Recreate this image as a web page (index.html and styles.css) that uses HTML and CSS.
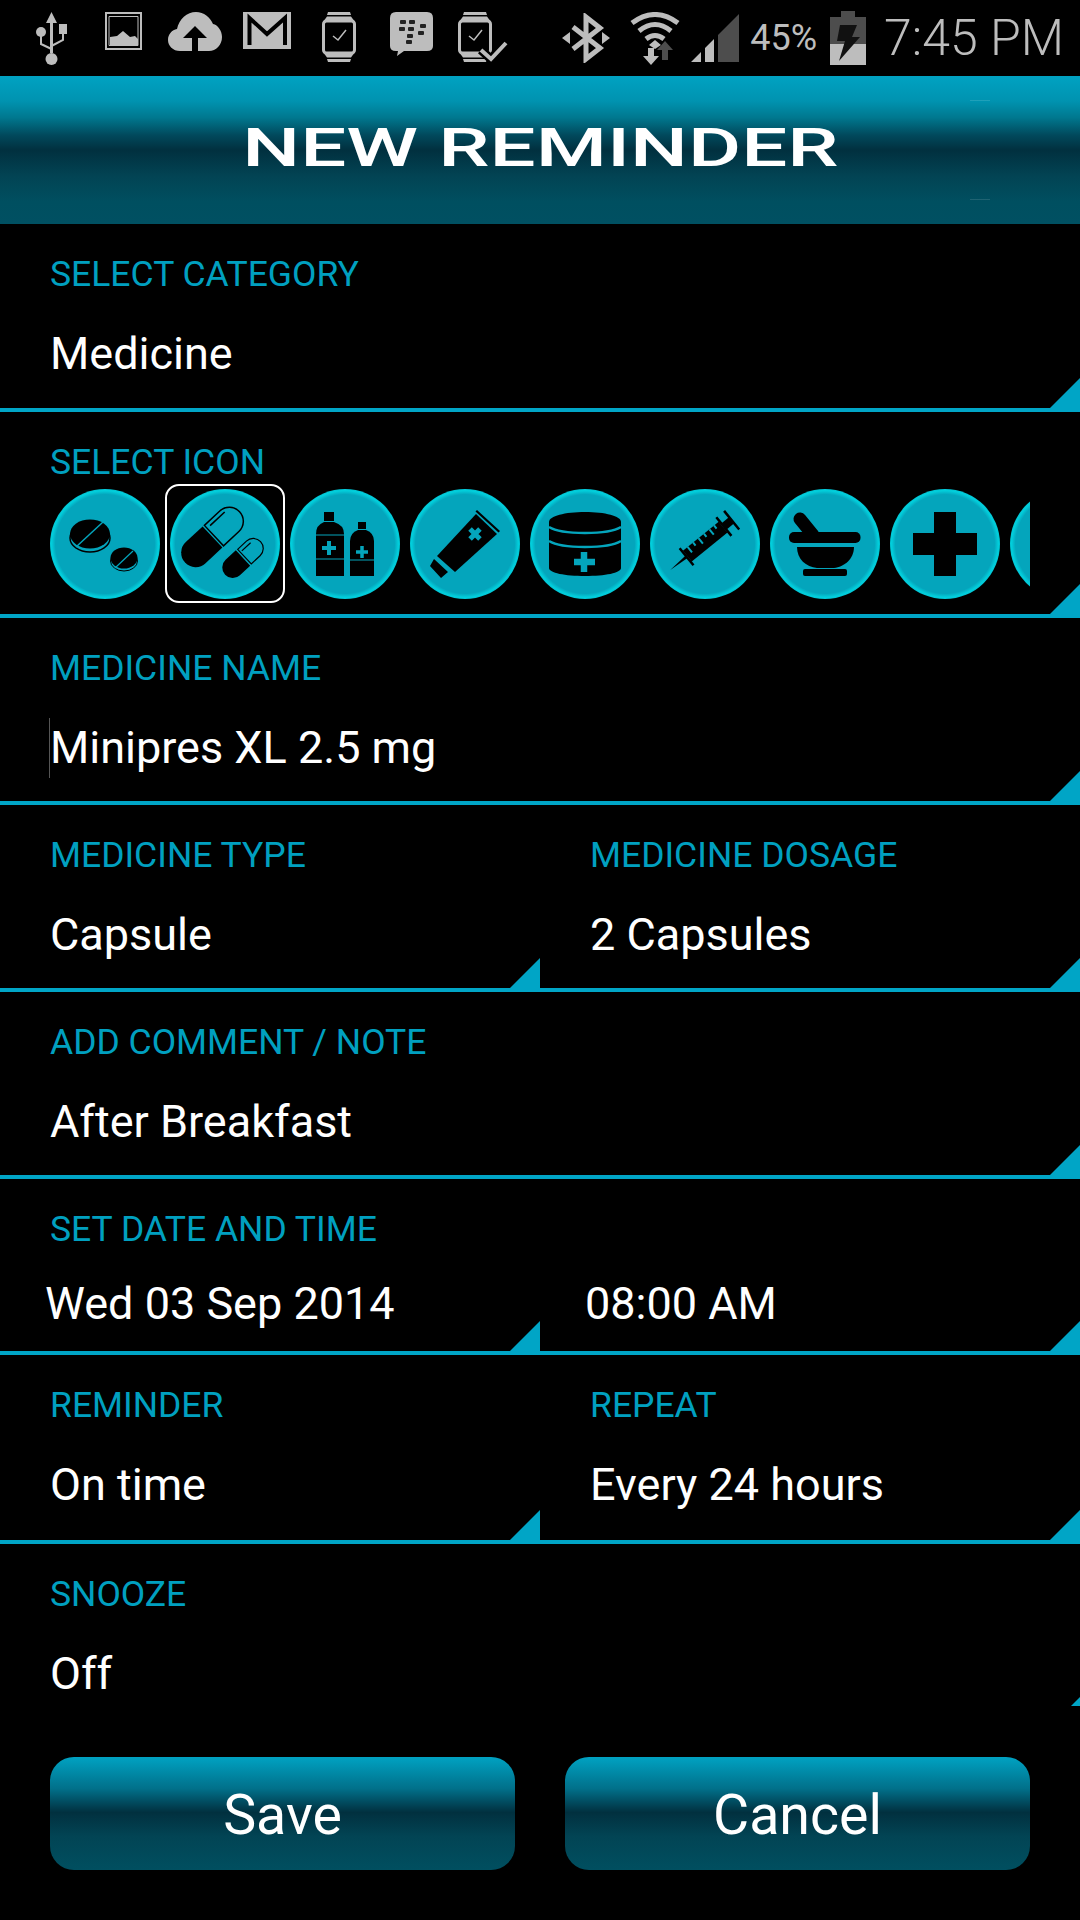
FILE: index.html
```html
<!DOCTYPE html>
<html lang="en">
<head>
  <meta charset="UTF-8" />
  <meta name="viewport" content="width=device-width, initial-scale=1.0"/>
  <title>New Reminder</title>
  <link rel="stylesheet" href="styles.css">
</head>
<body>

  <div class="status-bar">
    <div class="status-left">
      <div class="status-cell">
        <svg width="31" height="53" viewBox="0 0 31 53"><path class="sb" d="M15.500 0l5.500 11h-4v30h-3V11h-4z"/><circle class="sb" cx="15.500" cy="47" r="6"/><circle class="sb" cx="5" cy="20" r="5"/><rect class="sb" x="23" y="12" width="8" height="10"/><path class="sl" d="M5 22v10l10.500 5M27 20v8l-11.500 6"/></svg>
      </div>
      <div class="status-cell">
        <svg width="37" height="38" viewBox="0 0 37 38"><rect class="sl" x="1" y="1" width="35" height="36"/><path class="sb" d="M5 33V25l7-1 6-5 7 6 5-1 3 3v6z"/><path class="sl-thin" d="M4 4.500h29v29H4z"/></svg>
      </div>
      <div class="status-cell">
        <svg width="54" height="39" viewBox="0 0 54 39"><path class="sb" d="M12 39C5 39 0 34 0 28s4-10 9-11C11 7 19 0 28 0c8 0 14 5 17 12 5 1 9 7 9 13 0 8-6 14-13 14H30V26h9L27 14 15 26h9v13z"/></svg>
      </div>
      <div class="status-cell">
        <svg width="48" height="37" viewBox="0 0 48 37"><rect class="sb" width="48" height="37"/><path class="gmail" d="M6.500 33V6l17.500 16 18-16v27"/></svg>
      </div>
      <div class="status-cell">
        <svg width="34" height="50" viewBox="0 0 34 50"><use href="#watch"/></svg>
      </div>
      <div class="status-cell">
        <svg width="43" height="44" viewBox="0 0 43 44"><path class="sb" d="M6 0h31q6 0 6 6v28q0 5-6 5H14l-7 5 1-5H6q-6 0-6-5V6q0-6 6-6z"/><g class="bbm"><rect x="10" y="8" width="6" height="4" rx="1"/><rect x="19" y="8" width="6" height="4" rx="1"/><rect x="9" y="15" width="6" height="4" rx="1"/><rect x="18" y="15" width="6" height="4" rx="1"/><rect x="30" y="12" width="6" height="4" rx="1"/><rect x="28" y="19" width="6" height="4" rx="1"/><rect x="17" y="22" width="6" height="4" rx="1"/><rect x="16" y="28" width="6" height="4" rx="1"/></g></svg>
      </div>
      <div class="status-cell">
        <svg width="51" height="50" viewBox="0 0 51 50"><use href="#watch"/><path class="check-cut" d="M23 38l10 9 15-16"/><path class="check" d="M23 38l10 9 15-16"/></svg>
      </div>
    </div>
    <div class="status-right">
      <svg class="status-bt" width="48" height="50" viewBox="0 0 48 50"><path class="bt" d="M11 14l27 21-14 11V4l14 11-27 21"/><path class="sb" d="M0 25l8-6v12zM48 25l-8-6v12z"/></svg>
      <svg class="status-wifi" width="50" height="53" viewBox="0 0 50 53"><path class="wf" d="M2 11Q25-6 48 11M9 19Q25 6 41 19M16 27q9-7 18 0"/><path class="sb" d="M25 28l6 5-6 4-6-4zM18 36h6v8h5l-8 9-8-9h5z"/><path class="dim" d="M35 29l8 9h-5v10h-6V38h-5z"/></svg>
      <svg class="status-signal" width="48" height="48" viewBox="0 0 48 48"><path class="sb" d="M0 48l10-10v10zM14 34l9-9v23h-9z"/><path class="dim" d="M27 21L48 0v48H27z"/></svg>
      <span class="status-pct">45%</span>
      <svg class="status-battery" width="36" height="54" viewBox="0 0 36 54"><path class="dim" d="M11 0h14v6h11v30H0V6h11z"/><rect class="sb" y="33" width="36" height="21"/><path class="bolt" d="M10 14h17l-5 12h8L9 50l6-20H7z"/></svg>
      <span class="status-time">7:45 PM</span>
    </div>
    <svg class="defs" width="0" height="0"><defs><g id="watch"><path class="sb" d="M6 0h22l1 3H5zM5 4.500h24L33 10H1zM1 40h32l-4 5.500H5zM5 47h24l-1 3H6z"/><rect class="wl" x="1.500" y="9" width="31" height="32" rx="3"/><path class="wl-thin" d="M11 24l5 4 8-10"/></g></defs></svg>
  </div>

  <header class="app-header">
    <h1 class="app-title">NEW REMINDER</h1>
  </header>

  <div class="form">
    <div class="row row-category">
      <div class="cell">
        <div class="label">SELECT CATEGORY</div>
        <div class="value">Medicine</div>
      </div>
    </div>

    <div class="row row-icons">
      <div class="cell">
        <div class="label">SELECT ICON</div>
        <div class="icon-strip">

          <div class="med">
            <svg viewBox="0 0 110 110">
              <ellipse class="ln" cx="40" cy="49" rx="20" ry="14" stroke-width="1.500"/>
              <ellipse cx="40" cy="45" rx="20" ry="14.500"/>
              <path class="gap" d="M26 58l27-25" stroke-width="1.500"/>
              <ellipse class="ln" cx="74" cy="72" rx="13.500" ry="10" stroke-width="1"/>
              <ellipse cx="74" cy="69" rx="13.500" ry="10.500"/>
              <path class="gap" d="M65 79l18-17" stroke-width="1.200"/>
            </svg>
          </div>

          <div class="med med-selected">
            <svg viewBox="0 0 110 110">
              <g transform="translate(42.500 48) rotate(-43)">
                <path d="M0-14.500H-23a14.500 14.500 0 0 0 0 29H0z"/>
                <path class="ln" stroke-width="1.500" d="M2-14H23a14 14 0 0 1 0 28H2z"/>
                <path class="ln" stroke-width="1.500" d="M6-10H26"/>
              </g>
              <g transform="translate(73 69) rotate(-43)">
                <path d="M0-10.500H-14a10.500 10.500 0 0 0 0 21H0z"/>
                <path class="ln" stroke-width="1.200" d="M2-10H14a10 10 0 0 1 0 20H2z"/>
                <path class="ln" stroke-width="1.200" d="M4-6H16"/>
              </g>
            </svg>
          </div>

          <div class="med">
            <svg viewBox="0 0 110 110">
              <rect x="34" y="23" width="10" height="9"/>
              <path d="M26 87V45q0-9 8-12h10q10 3 10 12v42z"/>
              <path class="gap" d="M26 46h28M26 70h28" stroke-width="1"/>
              <path class="gap" d="M39 52v14M32 59h14" stroke-width="4"/>
              <rect x="68" y="33" width="8" height="7"/>
              <path d="M60 87V52q0-8 8-11h8q8 3 8 11v35z"/>
              <path class="gap" d="M60 71h24" stroke-width="1"/>
              <path class="gap" d="M72 57v12M66 63h12" stroke-width="3.500"/>
            </svg>
          </div>

          <div class="med">
            <svg viewBox="0 0 110 110">
              <path d="M66 25l21 20L45 83 27 67z"/>
              <path d="M67 21l23 21-1.500 1.500-23-21zM24 70l14 13-7 6-11-12z"/>
              <path class="gap" d="M58 45l14 0M65 38l0 14" stroke-width="5" transform="rotate(45 65 45)"/>
            </svg>
          </div>

          <div class="med">
            <svg viewBox="0 0 110 110">
              <path d="M19 33c0-6 16-10 36-10s36 4 36 10v46c0 5-16 8-36 8s-36-3-36-8z"/>
              <path class="gap" d="M19 38c8 5 22 6 36 6s28-1 36-6M19 52c8 5 22 6 36 6s28-1 36-6" stroke-width="2.500"/>
              <path class="gap" d="M54 63v20M44 73h21" stroke-width="6.500"/>
            </svg>
          </div>

          <div class="med">
            <svg viewBox="0 0 110 110">
              <g transform="translate(56 52) rotate(-39)">
                <rect x="-24" y="-7" width="46" height="14"/>
                <path class="gap" d="M-18-7v7M-11-7v4M-4-7v7M3-7v4M10-7v7M16-7v4" stroke-width="2"/>
                <path class="ln" stroke-width="2.500" d="M-25-11V11M23-12V12M33-12V12"/>
                <rect x="23" y="-4" width="10" height="8"/>
                <path d="M-25-1.500L-46 0-25 1.500z"/>
              </g>
            </svg>
          </div>

          <div class="med">
            <svg viewBox="0 0 110 110">
              <path class="ln" stroke-width="13" stroke-linecap="round" d="M30 30L43 46"/>
              <rect x="19" y="43" width="71.500" height="11" rx="5"/>
              <path d="M27 58h57c0 12-10 20-20 21H47c-11-1-20-9-20-21z"/>
              <rect x="33" y="80" width="44" height="7" rx="2"/>
            </svg>
          </div>

          <div class="med">
            <svg viewBox="0 0 110 110">
              <path d="M44 23h22v21h21v22H66v21H44V66H23V44h21z"/>
            </svg>
          </div>

          <div class="med"></div>
        </div>
      </div>
    </div>

    <div class="row row-name">
      <div class="cell">
        <div class="label">MEDICINE NAME</div>
        <div class="value value-caret">Minipres XL 2.5 mg</div>
      </div>
    </div>

    <div class="row row-split">
      <div class="cell">
        <div class="label">MEDICINE TYPE</div>
        <div class="value">Capsule</div>
      </div>
      <div class="cell">
        <div class="label">MEDICINE DOSAGE</div>
        <div class="value">2 Capsules</div>
      </div>
    </div>

    <div class="row row-note">
      <div class="cell">
        <div class="label">ADD COMMENT / NOTE</div>
        <div class="value">After Breakfast</div>
      </div>
    </div>

    <div class="row row-split row-date">
      <div class="cell">
        <div class="label">SET DATE AND TIME</div>
        <div class="value value-date">Wed 03 Sep 2014</div>
      </div>
      <div class="cell">
        <div class="label">&nbsp;</div>
        <div class="value value-date">08:00 AM</div>
      </div>
    </div>

    <div class="row row-split row-repeat">
      <div class="cell">
        <div class="label">REMINDER</div>
        <div class="value">On time</div>
      </div>
      <div class="cell">
        <div class="label">REPEAT</div>
        <div class="value">Every 24 hours</div>
      </div>
    </div>

    <div class="row row-snooze">
      <div class="cell">
        <div class="label">SNOOZE</div>
        <div class="value">Off</div>
      </div>
    </div>
  </div>

  <div class="actions">
    <button class="btn">Save</button>
    <button class="btn">Cancel</button>
  </div>

</body>
</html>
```

FILE: styles.css
```css
* {
  box-sizing: border-box;
}
body {
  margin: 0;
  width: 1080px;
  height: 1920px;
  overflow: hidden;
  background-color: #000;
  font-family: Roboto, 'Liberation Sans', sans-serif;
  color: #fff;
}

/* status bar */
.status-bar {
  height: 76px;
  display: flex;
  justify-content: space-between;
  align-items: center;
  color: #bdbdbd;
}
.status-left {
  display: flex;
  padding-left: 15px;
}
.status-cell {
  width: 72px;
  display: flex;
  justify-content: center;
}
.status-right {
  display: flex;
  align-items: center;
  padding-right: 16px;
}
.status-bar svg {
  display: block;
}
.defs {
  position: absolute;
}
.status-wifi {
  margin-left: 20px;
}
.status-signal {
  margin-left: 11px;
}
.status-pct {
  margin-left: 11px;
  font-size: 36px;
}
.status-battery {
  margin-left: 13px;
}
.status-time {
  margin-left: 18px;
  font-size: 50px;
  font-weight: 300;
}
.sb {
  fill: #bdbdbd;
}
.sl {
  fill: none;
  stroke: #bdbdbd;
  stroke-width: 2;
}
.sl-thin {
  fill: none;
  stroke: #bdbdbd;
  stroke-width: 1;
}
.bt {
  fill: none;
  stroke: #bdbdbd;
  stroke-width: 5;
}
.dim {
  fill: #4d4d4d;
}
.bolt {
  fill: #111;
}
.bbm {
  fill: #222;
}
.gmail {
  fill: none;
  stroke: #000;
  stroke-width: 4;
}
.wf {
  fill: none;
  stroke: #bdbdbd;
  stroke-width: 5;
}
.wl {
  fill: #000;
  stroke: #bdbdbd;
  stroke-width: 3;
}
.wl-thin {
  fill: none;
  stroke: #bdbdbd;
  stroke-width: 1.500;
}
.check {
  fill: none;
  stroke: #bdbdbd;
  stroke-width: 4;
}
.check-cut {
  fill: none;
  stroke: #000;
  stroke-width: 9;
}

/* header */
.app-header {
  position: relative;
  height: 148px;
  display: flex;
  justify-content: center;
  align-items: center;
  padding-bottom: 4px;
  background: linear-gradient(to bottom, #00a2c2 0%, #0093b0 17%, #00788f 28%, #01495c 40%, #01303f 50%, #024454 68%, #004f60 85%, #005062 100%);
}
.app-header::before,
.app-header::after {
  content: "";
  position: absolute;
  right: 90px;
  width: 20px;
  height: 1px;
  background-color: rgba(255, 255, 255, 0.12);
}
.app-header::before {
  top: 24px;
}
.app-header::after {
  top: 123px;
}
.app-title {
  margin: 0;
  font-size: 54px;
  font-weight: 500;
  line-height: 1;
  transform: scaleX(1.51);
}

/* form rows */
.form {
  height: 1482px;
  overflow: hidden;
}
.row {
  display: flex;
  height: 187px;
}
.row-category {
  height: 188px;
}
.row-icons {
  height: 206px;
}
.row-date {
  height: 176px;
}
.row-repeat {
  height: 189px;
}
.cell {
  position: relative;
  flex: 1;
  padding: 31px 0 0 50px;
  border-bottom: 4px solid #00a5c6;
}
.cell::after {
  content: "";
  position: absolute;
  right: 0;
  bottom: 0;
  width: 30px;
  height: 30px;
  background-color: #00a5c6;
  clip-path: polygon(100% 0, 100% 100%, 0 100%);
}
.label {
  height: 38px;
  font-size: 35.500px;
  line-height: 38px;
  color: #00a0c0;
}
.value {
  margin-top: 31px;
  height: 60px;
  font-size: 45px;
  line-height: 60px;
}
.value-caret {
  border-left: 1px solid #555;
  margin-left: -1px;
}
.value-date {
  margin-top: 26px;
  margin-left: -5px;
}

/* icon picker */
.icon-strip {
  display: flex;
  gap: 10px;
  width: 980px;
  height: 120px;
  margin-top: 3px;
  padding-top: 5px;
  overflow: hidden;
}
.med {
  position: relative;
  flex: 0 0 110px;
  height: 110px;
  border-radius: 50%;
  background: radial-gradient(circle closest-side, #04a5bc 0%, #04a5bc 90%, #02cfdc 97%, #02c4d4 100%);
}
.med svg {
  display: block;
  width: 110px;
  height: 110px;
  fill: #000;
}
.med-selected::after {
  content: "";
  position: absolute;
  top: -5px;
  left: -5px;
  right: -5px;
  bottom: -4px;
  border: 2px solid #fff;
  border-radius: 14px;
}
.ln {
  fill: none;
  stroke: #000;
}
.gap {
  fill: none;
  stroke: #04a5bc;
}

/* buttons */
.actions {
  display: flex;
  justify-content: space-between;
  padding: 51px 50px 0;
}
.btn {
  width: 465px;
  height: 113px;
  padding: 3px 0 0;
  border: 0;
  border-radius: 24px;
  background: linear-gradient(to bottom, #00a2c2 0%, #01708a 28%, #01303f 49%, #024454 70%, #004f60 100%);
  font-family: Roboto, 'Liberation Sans', sans-serif;
  font-size: 55.500px;
  color: #fff;
}
```
